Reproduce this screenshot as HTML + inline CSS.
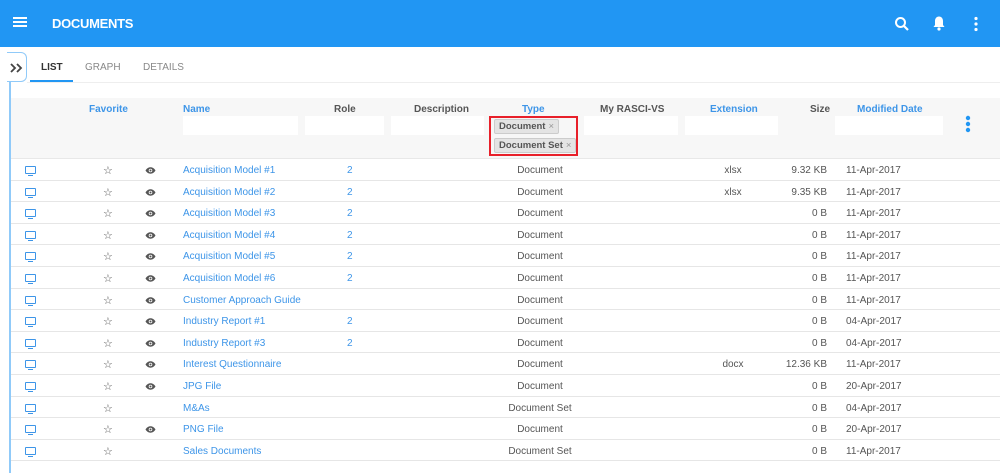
<!DOCTYPE html>
<html><head><meta charset="utf-8"><style>
*{margin:0;padding:0;box-sizing:border-box}
body{width:1000px;height:462px;overflow:hidden;background:#fff;font-family:"Liberation Sans",Arial,sans-serif;font-size:10px;color:#555;position:relative}
.hdr{position:absolute;left:0;top:0;width:1000px;height:47px;background:#2196f3}
.hdr .t{position:absolute;left:52px;top:16px;color:#fff;font-weight:bold;font-size:13px;letter-spacing:-0.3px}
.bar{position:absolute;left:9px;top:53px;width:2px;height:420px;background:#90caf9}
.tog{position:absolute;left:7px;top:52px;width:20px;height:30px;border:1px solid #90caf9;border-left:none;border-radius:0 6px 6px 0;background:#fff}
.tabs{position:absolute;left:30px;top:62px;font-size:10px}
.tab{position:absolute;top:0;white-space:nowrap;color:#888}
.uline{position:absolute;left:30px;top:80px;width:43px;height:2px;background:#2196f3}
.sep{position:absolute;left:27px;top:82px;width:973px;height:1px;background:#eee}
.th{position:absolute;left:11px;top:98px;width:989px;height:61px;background:#f7f7f7;border-bottom:1px solid #e8e8e8}
.h{position:absolute;top:104px;font-weight:bold;font-size:10px;color:#555;white-space:nowrap}
.b{color:#3d95e8}
.in{position:absolute;top:116px;height:19px;background:#fff}
.chip{position:absolute;left:494px;height:15px;background:#e4e4e4;border:1px solid #ccc;border-radius:2px;font-weight:bold;font-size:9.5px;color:#555;padding:1px 4px;white-space:nowrap}
.chip i{font-style:normal;color:#999;font-weight:normal;margin-left:3px}
.red{position:absolute;left:489px;top:116px;width:89px;height:40px;border:2px solid #e8202a}
.r{position:absolute;left:11px;width:989px;height:21.6px;border-bottom:1px solid #e6e6e6}
.r span{position:absolute;top:6px;white-space:nowrap}
.mon{position:absolute;left:14px;top:7px;width:11px;height:8px;border:1.5px solid #3d95e8;border-radius:1px}
.mon:after{content:"";position:absolute;left:2px;top:8px;width:5px;height:1px;background:#3d95e8}
.st{left:92px;color:#555;font-size:11px;top:5px!important}
.ey{left:134px;top:8px!important;width:11px;height:7px}
.nm{left:172px;color:#3d95e8}
.ro{left:336px;color:#3d95e8}
.ty{left:479px;width:100px;text-align:center}
.ex{left:694px;width:56px;text-align:center}
.sz{left:756px;width:60px;text-align:right}
.dt{left:835px}
</style></head><body>
<svg width="0" height="0" style="position:absolute"><defs><symbol id="eye" viewBox="0 0 11 7"><path d="M0.5 3.5C2 1 4 0.3 5.5 0.3S9 1 10.5 3.5C9 6 7 6.7 5.5 6.7S2 6 0.5 3.5z" fill="#555"/><circle cx="5.5" cy="3.5" r="1.8" fill="#fff"/><circle cx="5.5" cy="3.5" r="1" fill="#555"/></symbol></defs></svg>
<div class="hdr">
<svg style="position:absolute;left:13px;top:16px" width="14" height="12"><rect y="1" width="14" height="2" fill="#fff"/><rect y="5" width="14" height="2" fill="#fff"/><rect y="9" width="14" height="2" fill="#fff"/></svg>
<div class="t">DOCUMENTS</div>
<svg style="position:absolute;left:894px;top:16px" width="16" height="16"><circle cx="6.5" cy="6.5" r="4.5" stroke="#fff" stroke-width="2" fill="none"/><line x1="10" y1="10" x2="14" y2="14" stroke="#fff" stroke-width="2.2"/></svg>
<svg style="position:absolute;left:932px;top:15px" width="14" height="16"><path d="M7 1.5c-2.5 0-4 2-4 4.5v4L1.5 12h11L11 10V6c0-2.5-1.5-4.5-4-4.5z" fill="#fff"/><circle cx="7" cy="14" r="1.6" fill="#fff"/></svg>
<svg style="position:absolute;left:973px;top:16px" width="6" height="16"><circle cx="3" cy="2.5" r="1.6" fill="#fff"/><circle cx="3" cy="8" r="1.6" fill="#fff"/><circle cx="3" cy="13.5" r="1.6" fill="#fff"/></svg>
</div>
<div class="bar"></div>
<div class="tog"><svg style="position:absolute;left:3px;top:10px" width="14" height="10"><path d="M1 1l4 4-4 4M7 1l4 4-4 4" stroke="#444" stroke-width="1.8" fill="none"/></svg></div>
<div class="tabs">
<div class="tab" style="left:11px;color:#333;font-weight:bold">LIST</div>
<div class="tab" style="left:55px">GRAPH</div>
<div class="tab" style="left:113px">DETAILS</div>
</div>
<div class="uline"></div><div class="sep"></div>
<div class="th"></div>
<div class="h b" style="left:89px">Favorite</div>
<div class="h b" style="left:183px">Name</div>
<div class="h" style="left:334px">Role</div>
<div class="h" style="left:414px">Description</div>
<div class="h b" style="left:522px">Type</div>
<div class="h" style="left:600px">My RASCI-VS</div>
<div class="h b" style="left:710px">Extension</div>
<div class="h" style="left:810px">Size</div>
<div class="h b" style="left:857px">Modified Date</div>
<div class="in" style="left:183px;width:115px"></div>
<div class="in" style="left:305px;width:79px"></div>
<div class="in" style="left:391px;width:93px"></div>
<div class="in" style="left:584px;width:94px"></div>
<div class="in" style="left:685px;width:93px"></div>
<div class="in" style="left:835px;width:108px"></div>
<div class="chip" style="top:119px">Document<i>×</i></div>
<div class="chip" style="top:138px">Document Set<i>×</i></div>
<div class="red"></div>
<svg style="position:absolute;left:965px;top:115px" width="6" height="18"><circle cx="3" cy="3" r="2.2" fill="#2196f3"/><circle cx="3" cy="9" r="2.2" fill="#2196f3"/><circle cx="3" cy="15" r="2.2" fill="#2196f3"/></svg>

<div class="r" style="top:159px"><div class="mon"></div><span class="st">☆</span><svg class="ey" style="position:absolute;left:134px;top:8px"><use href="#eye"/></svg><span class="nm">Acquisition Model #1</span><span class="ro">2</span><span class="ty">Document</span><span class="ex">xlsx</span><span class="sz">9.32 KB</span><span class="dt">11-Apr-2017</span></div>
<div class="r" style="top:180.6px"><div class="mon"></div><span class="st">☆</span><svg class="ey" style="position:absolute;left:134px;top:8px"><use href="#eye"/></svg><span class="nm">Acquisition Model #2</span><span class="ro">2</span><span class="ty">Document</span><span class="ex">xlsx</span><span class="sz">9.35 KB</span><span class="dt">11-Apr-2017</span></div>
<div class="r" style="top:202.2px"><div class="mon"></div><span class="st">☆</span><svg class="ey" style="position:absolute;left:134px;top:8px"><use href="#eye"/></svg><span class="nm">Acquisition Model #3</span><span class="ro">2</span><span class="ty">Document</span><span class="sz">0 B</span><span class="dt">11-Apr-2017</span></div>
<div class="r" style="top:223.8px"><div class="mon"></div><span class="st">☆</span><svg class="ey" style="position:absolute;left:134px;top:8px"><use href="#eye"/></svg><span class="nm">Acquisition Model #4</span><span class="ro">2</span><span class="ty">Document</span><span class="sz">0 B</span><span class="dt">11-Apr-2017</span></div>
<div class="r" style="top:245.4px"><div class="mon"></div><span class="st">☆</span><svg class="ey" style="position:absolute;left:134px;top:8px"><use href="#eye"/></svg><span class="nm">Acquisition Model #5</span><span class="ro">2</span><span class="ty">Document</span><span class="sz">0 B</span><span class="dt">11-Apr-2017</span></div>
<div class="r" style="top:267px"><div class="mon"></div><span class="st">☆</span><svg class="ey" style="position:absolute;left:134px;top:8px"><use href="#eye"/></svg><span class="nm">Acquisition Model #6</span><span class="ro">2</span><span class="ty">Document</span><span class="sz">0 B</span><span class="dt">11-Apr-2017</span></div>
<div class="r" style="top:288.6px"><div class="mon"></div><span class="st">☆</span><svg class="ey" style="position:absolute;left:134px;top:8px"><use href="#eye"/></svg><span class="nm">Customer Approach Guide</span><span class="ty">Document</span><span class="sz">0 B</span><span class="dt">11-Apr-2017</span></div>
<div class="r" style="top:310.2px"><div class="mon"></div><span class="st">☆</span><svg class="ey" style="position:absolute;left:134px;top:8px"><use href="#eye"/></svg><span class="nm">Industry Report #1</span><span class="ro">2</span><span class="ty">Document</span><span class="sz">0 B</span><span class="dt">04-Apr-2017</span></div>
<div class="r" style="top:331.8px"><div class="mon"></div><span class="st">☆</span><svg class="ey" style="position:absolute;left:134px;top:8px"><use href="#eye"/></svg><span class="nm">Industry Report #3</span><span class="ro">2</span><span class="ty">Document</span><span class="sz">0 B</span><span class="dt">04-Apr-2017</span></div>
<div class="r" style="top:353.4px"><div class="mon"></div><span class="st">☆</span><svg class="ey" style="position:absolute;left:134px;top:8px"><use href="#eye"/></svg><span class="nm">Interest Questionnaire</span><span class="ty">Document</span><span class="ex">docx</span><span class="sz">12.36 KB</span><span class="dt">11-Apr-2017</span></div>
<div class="r" style="top:375px"><div class="mon"></div><span class="st">☆</span><svg class="ey" style="position:absolute;left:134px;top:8px"><use href="#eye"/></svg><span class="nm">JPG File</span><span class="ty">Document</span><span class="sz">0 B</span><span class="dt">20-Apr-2017</span></div>
<div class="r" style="top:396.6px"><div class="mon"></div><span class="st">☆</span><span class="nm">M&amp;As</span><span class="ty">Document Set</span><span class="sz">0 B</span><span class="dt">04-Apr-2017</span></div>
<div class="r" style="top:418.2px"><div class="mon"></div><span class="st">☆</span><svg class="ey" style="position:absolute;left:134px;top:8px"><use href="#eye"/></svg><span class="nm">PNG File</span><span class="ty">Document</span><span class="sz">0 B</span><span class="dt">20-Apr-2017</span></div>
<div class="r" style="top:439.8px"><div class="mon"></div><span class="st">☆</span><span class="nm">Sales Documents</span><span class="ty">Document Set</span><span class="sz">0 B</span><span class="dt">11-Apr-2017</span></div>
</body></html>
